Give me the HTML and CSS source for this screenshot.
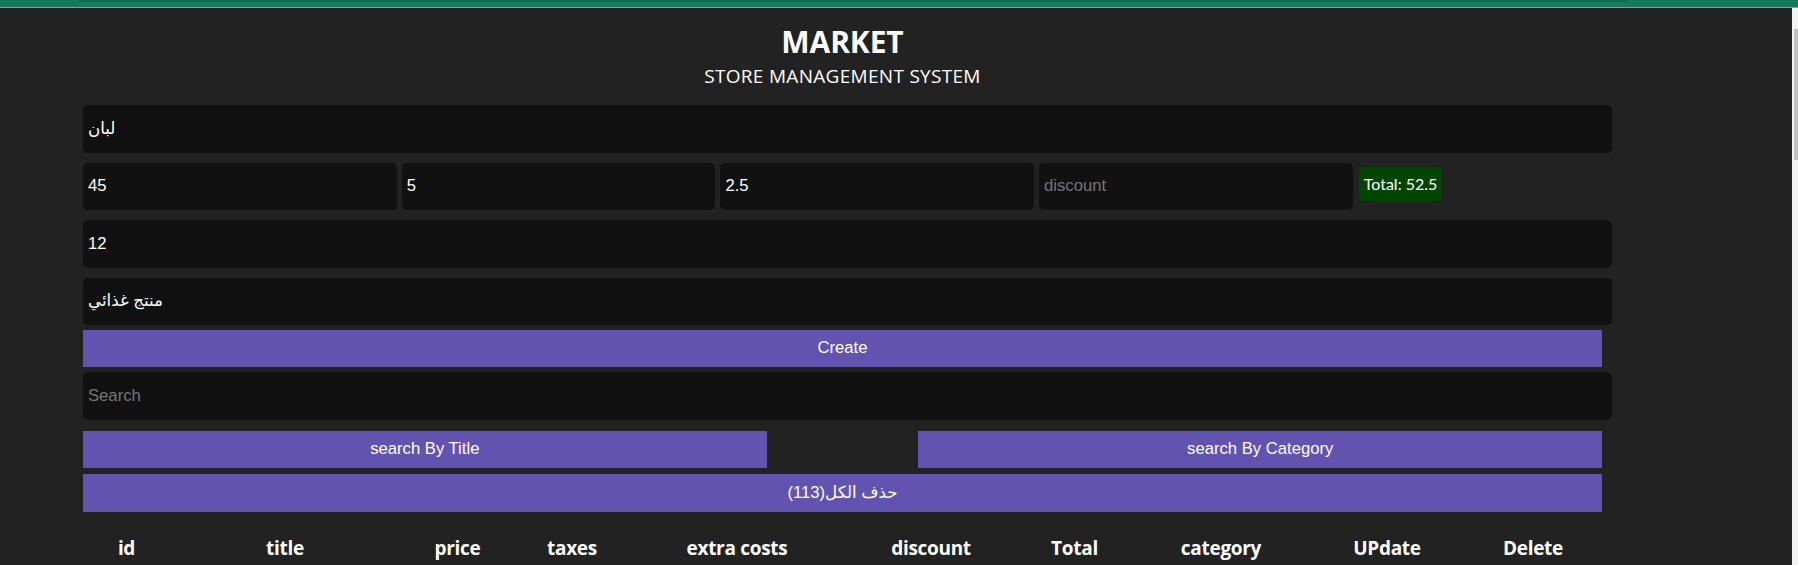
FILE: index.html
```html
<!DOCTYPE html>
<html lang="en">
<head>
<meta charset="utf-8">
<title>CRUDS</title>
<link rel="stylesheet" href="styles.css">
</head>
<body>
<div class="winbar"><div class="winbar-inner"></div></div>
<div class="viewport">
  <main class="page">
    <div class="crud">
      <header class="head">
        <h1 class="title">MARKET</h1>
        <p class="subtitle">STORE MANAGEMENT SYSTEM</p>
      </header>
      <section class="inputs">
        <input class="field" type="text" value="لبان">
        <div class="price-row">
          <input class="field small" type="number" value="45">
          <input class="field small" type="number" value="5">
          <input class="field small" type="number" value="2.5">
          <input class="field small" type="number" placeholder="discount">
          <span class="total">Total: 52.5</span>
        </div>
        <input class="field" type="number" value="12">
        <input class="field" type="text" value="منتج غذائي">
      </section>
      <button class="btn btn-create">Create</button>
      <input class="field search" type="text" placeholder="Search">
      <div class="search-btns">
        <button class="btn btn-half">search By Title</button>
        <button class="btn btn-half">search By Category</button>
      </div>
      <button class="btn btn-delete">حذف الكل(113)</button>
      <table class="grid">
        <colgroup>
          <col style="width:87px"><col style="width:230px"><col style="width:115px"><col style="width:114px"><col style="width:216px"><col style="width:172px"><col style="width:115px"><col style="width:178px"><col style="width:154px"><col style="width:138px">
        </colgroup>
        <thead>
          <tr>
            <th>id</th><th>title</th><th>price</th><th>taxes</th><th>extra costs</th><th>discount</th><th>Total</th><th>category</th><th>UPdate</th><th>Delete</th>
          </tr>
        </thead>
      </table>
    </div>
  </main>
  <div class="scrollbar"><div class="thumb"></div></div>
</div>
</body>
</html>
```
FILE: styles.css
```css
* { box-sizing: content-box; }
html, body { margin: 0; padding: 0; }
body {
  background: #222222;
  color: #ffffff;
  font-family: "Open Sans", "Noto Sans", sans-serif;
  height: 565px;
  overflow: hidden;
}
.winbar {
  height: 7px;
  background: #187a5c;
  border-bottom: 1px solid #5fb096;
  position: relative;
}
.winbar-inner {
  margin-left: 78px;
  width: 1550px;
  height: 2px;
  background: #136a4f;
  border-radius: 0 0 4px 4px;
}
.viewport {
  display: flex;
  height: 557px;
}
.page {
  flex: 1;
  overflow: hidden;
}
.crud {
  width: 1519px;
  margin-left: 83px;
}
.head {
  text-align: center;
  padding-top: 14px;
  height: 83px;
}
.title {
  margin: 0;
  font-size: 30px;
  line-height: 40px;
  font-weight: 700;
  letter-spacing: -0.1px;
}
.subtitle {
  margin: 2px 0 0;
  font-size: 19px;
  line-height: 24px;
  font-weight: 400;
  letter-spacing: 0.3px;
}
.inputs {
  display: flex;
  flex-direction: column;
  gap: 10px;
}
.field {
  display: block;
  width: 100%;
  height: 37.5px;
  padding: 5px;
  margin: 0;
  border: none;
  outline: none;
  background: #111111;
  border-radius: 5px;
  color: #ffffff;
  font-family: "Liberation Sans", Arial, "DejaVu Sans", sans-serif;
  font-size: 16.67px;
}
.field::placeholder { color: #757575; }
.field::-webkit-outer-spin-button,
.field::-webkit-inner-spin-button { -webkit-appearance: none; margin: 0; }
.field[type=number] { -moz-appearance: textfield; }
.price-row {
  display: flex;
  align-items: center;
  gap: 4.9px;
}
.field.small {
  width: 303.8px;
  flex: none;
}
.total {
  background: #024402;
  border-radius: 4px;
  padding: 5px 5px;
  font-family: "Lato", sans-serif;
  font-size: 16px;
  line-height: 24px;
  margin-left: 1px;
  margin-top: -4px;
}
.btn {
  display: block;
  height: 37.5px;
  border: none;
  background: #6253b1;
  color: #ffffff;
  font-family: "Liberation Sans", Arial, "DejaVu Sans", sans-serif;
  font-size: 16.67px;
  padding: 0;
  cursor: pointer;
}
.btn-create {
  width: 100%;
  margin-top: 4.5px;
}
.search {
  margin-top: 5px;
}
.search-btns {
  display: flex;
  justify-content: space-between;
  margin-top: 11px;
}
.btn-half { width: 45%; }
.btn-delete {
  width: 100%;
  margin-top: 6.3px;
}
.grid {
  width: 100%;
  table-layout: fixed;
  border-collapse: separate;
  border-spacing: 0;
  margin-top: 17.5px;
}
.grid th {
  padding: 6px 0;
  font-size: 19px;
  font-weight: 700;
  text-align: center;
  line-height: 26px;
  letter-spacing: -0.3px;
}
.scrollbar {
  width: 6px;
  background: #f1f1f1;
  display: flex;
  justify-content: flex-end;
}
.thumb {
  width: 4px;
  height: 131px;
  margin-top: 21px;
  background: #c1c1c1;
}
```
